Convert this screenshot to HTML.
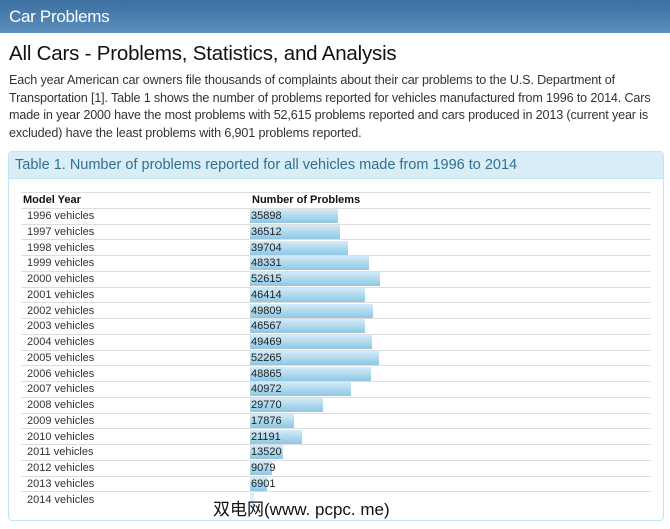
<!DOCTYPE html>
<html><head><meta charset="utf-8"><style>
*{margin:0;padding:0;box-sizing:border-box}
body{width:670px;height:529px;overflow:hidden;background:#fff;font-family:"Liberation Sans",Arial,sans-serif;color:#222;position:relative}
.hdr{height:33px;background:linear-gradient(#3a6fa0,#5d8fbd);color:#fff;font-size:17px;padding:7px 0 0 9px;letter-spacing:-0.3px}
h1{font-weight:normal;font-size:20.5px;position:absolute;left:9px;top:42px;color:#111;letter-spacing:-0.2px}
p{position:absolute;left:9px;top:72px;width:660px;font-size:12.6px;line-height:17.6px;color:#333;letter-spacing:-0.15px}
.panel{position:absolute;left:8px;top:151px;width:656px;height:370px;border:1px solid #bce8f1;border-radius:4px}
.ph{height:27px;background:#d9edf7;border-bottom:1px solid #bce8f1;color:#31708f;font-size:14.5px;padding:5px 0 0 6px}
table{position:absolute;left:12px;top:40px;width:630px;border-collapse:collapse;font-size:11px}
td,th{height:15.75px;border-top:1px solid #ddd;padding:0;text-align:left;vertical-align:middle}
th{font-weight:bold;color:#111;padding-left:2px}
td:first-child{padding-left:6px;width:229px;color:#333}
.b{display:inline-block;height:14px;line-height:14px;background:linear-gradient(#d4ebf7,#8ec7e6);color:#222;padding-left:1px;white-space:nowrap;overflow:visible;vertical-align:middle}
.wm{position:absolute;left:213px;top:495px;font-size:17px;color:#111;font-family:"Liberation Sans","Noto Sans CJK SC",sans-serif;background:rgba(255,255,255,.6)}
</style></head><body>
<div class="hdr">Car Problems</div>
<h1>All Cars - Problems, Statistics, and Analysis</h1>
<p>Each year American car owners file thousands of complaints about their car problems to the U.S. Department of Transportation [1]. Table 1 shows the number of problems reported for vehicles manufactured from 1996 to 2014. Cars made in year 2000 have the most problems with 52,615 problems reported and cars produced in 2013 (current year is excluded) have the least problems with 6,901 problems reported.</p>
<div class="panel"><div class="ph">Table 1. Number of problems reported for all vehicles made from 1996 to 2014</div>
<table>
<tr><th>Model Year</th><th>Number of Problems</th></tr>
<tr><td>1996 vehicles</td><td><span class="b" style="width:88px">35898</span></td></tr>
<tr><td>1997 vehicles</td><td><span class="b" style="width:90px">36512</span></td></tr>
<tr><td>1998 vehicles</td><td><span class="b" style="width:98px">39704</span></td></tr>
<tr><td>1999 vehicles</td><td><span class="b" style="width:119px">48331</span></td></tr>
<tr><td>2000 vehicles</td><td><span class="b" style="width:130px">52615</span></td></tr>
<tr><td>2001 vehicles</td><td><span class="b" style="width:115px">46414</span></td></tr>
<tr><td>2002 vehicles</td><td><span class="b" style="width:123px">49809</span></td></tr>
<tr><td>2003 vehicles</td><td><span class="b" style="width:115px">46567</span></td></tr>
<tr><td>2004 vehicles</td><td><span class="b" style="width:122px">49469</span></td></tr>
<tr><td>2005 vehicles</td><td><span class="b" style="width:129px">52265</span></td></tr>
<tr><td>2006 vehicles</td><td><span class="b" style="width:121px">48865</span></td></tr>
<tr><td>2007 vehicles</td><td><span class="b" style="width:101px">40972</span></td></tr>
<tr><td>2008 vehicles</td><td><span class="b" style="width:73px">29770</span></td></tr>
<tr><td>2009 vehicles</td><td><span class="b" style="width:44px">17876</span></td></tr>
<tr><td>2010 vehicles</td><td><span class="b" style="width:52px">21191</span></td></tr>
<tr><td>2011 vehicles</td><td><span class="b" style="width:33px">13520</span></td></tr>
<tr><td>2012 vehicles</td><td><span class="b" style="width:22px">9079</span></td></tr>
<tr><td>2013 vehicles</td><td><span class="b" style="width:17px">6901</span></td></tr>
<tr><td>2014 vehicles</td><td><span class="b" style="width:4px;padding:0"></span></td></tr>
</table></div>
<div class="wm">双电网(www. pcpc. me)</div>
</body></html>
